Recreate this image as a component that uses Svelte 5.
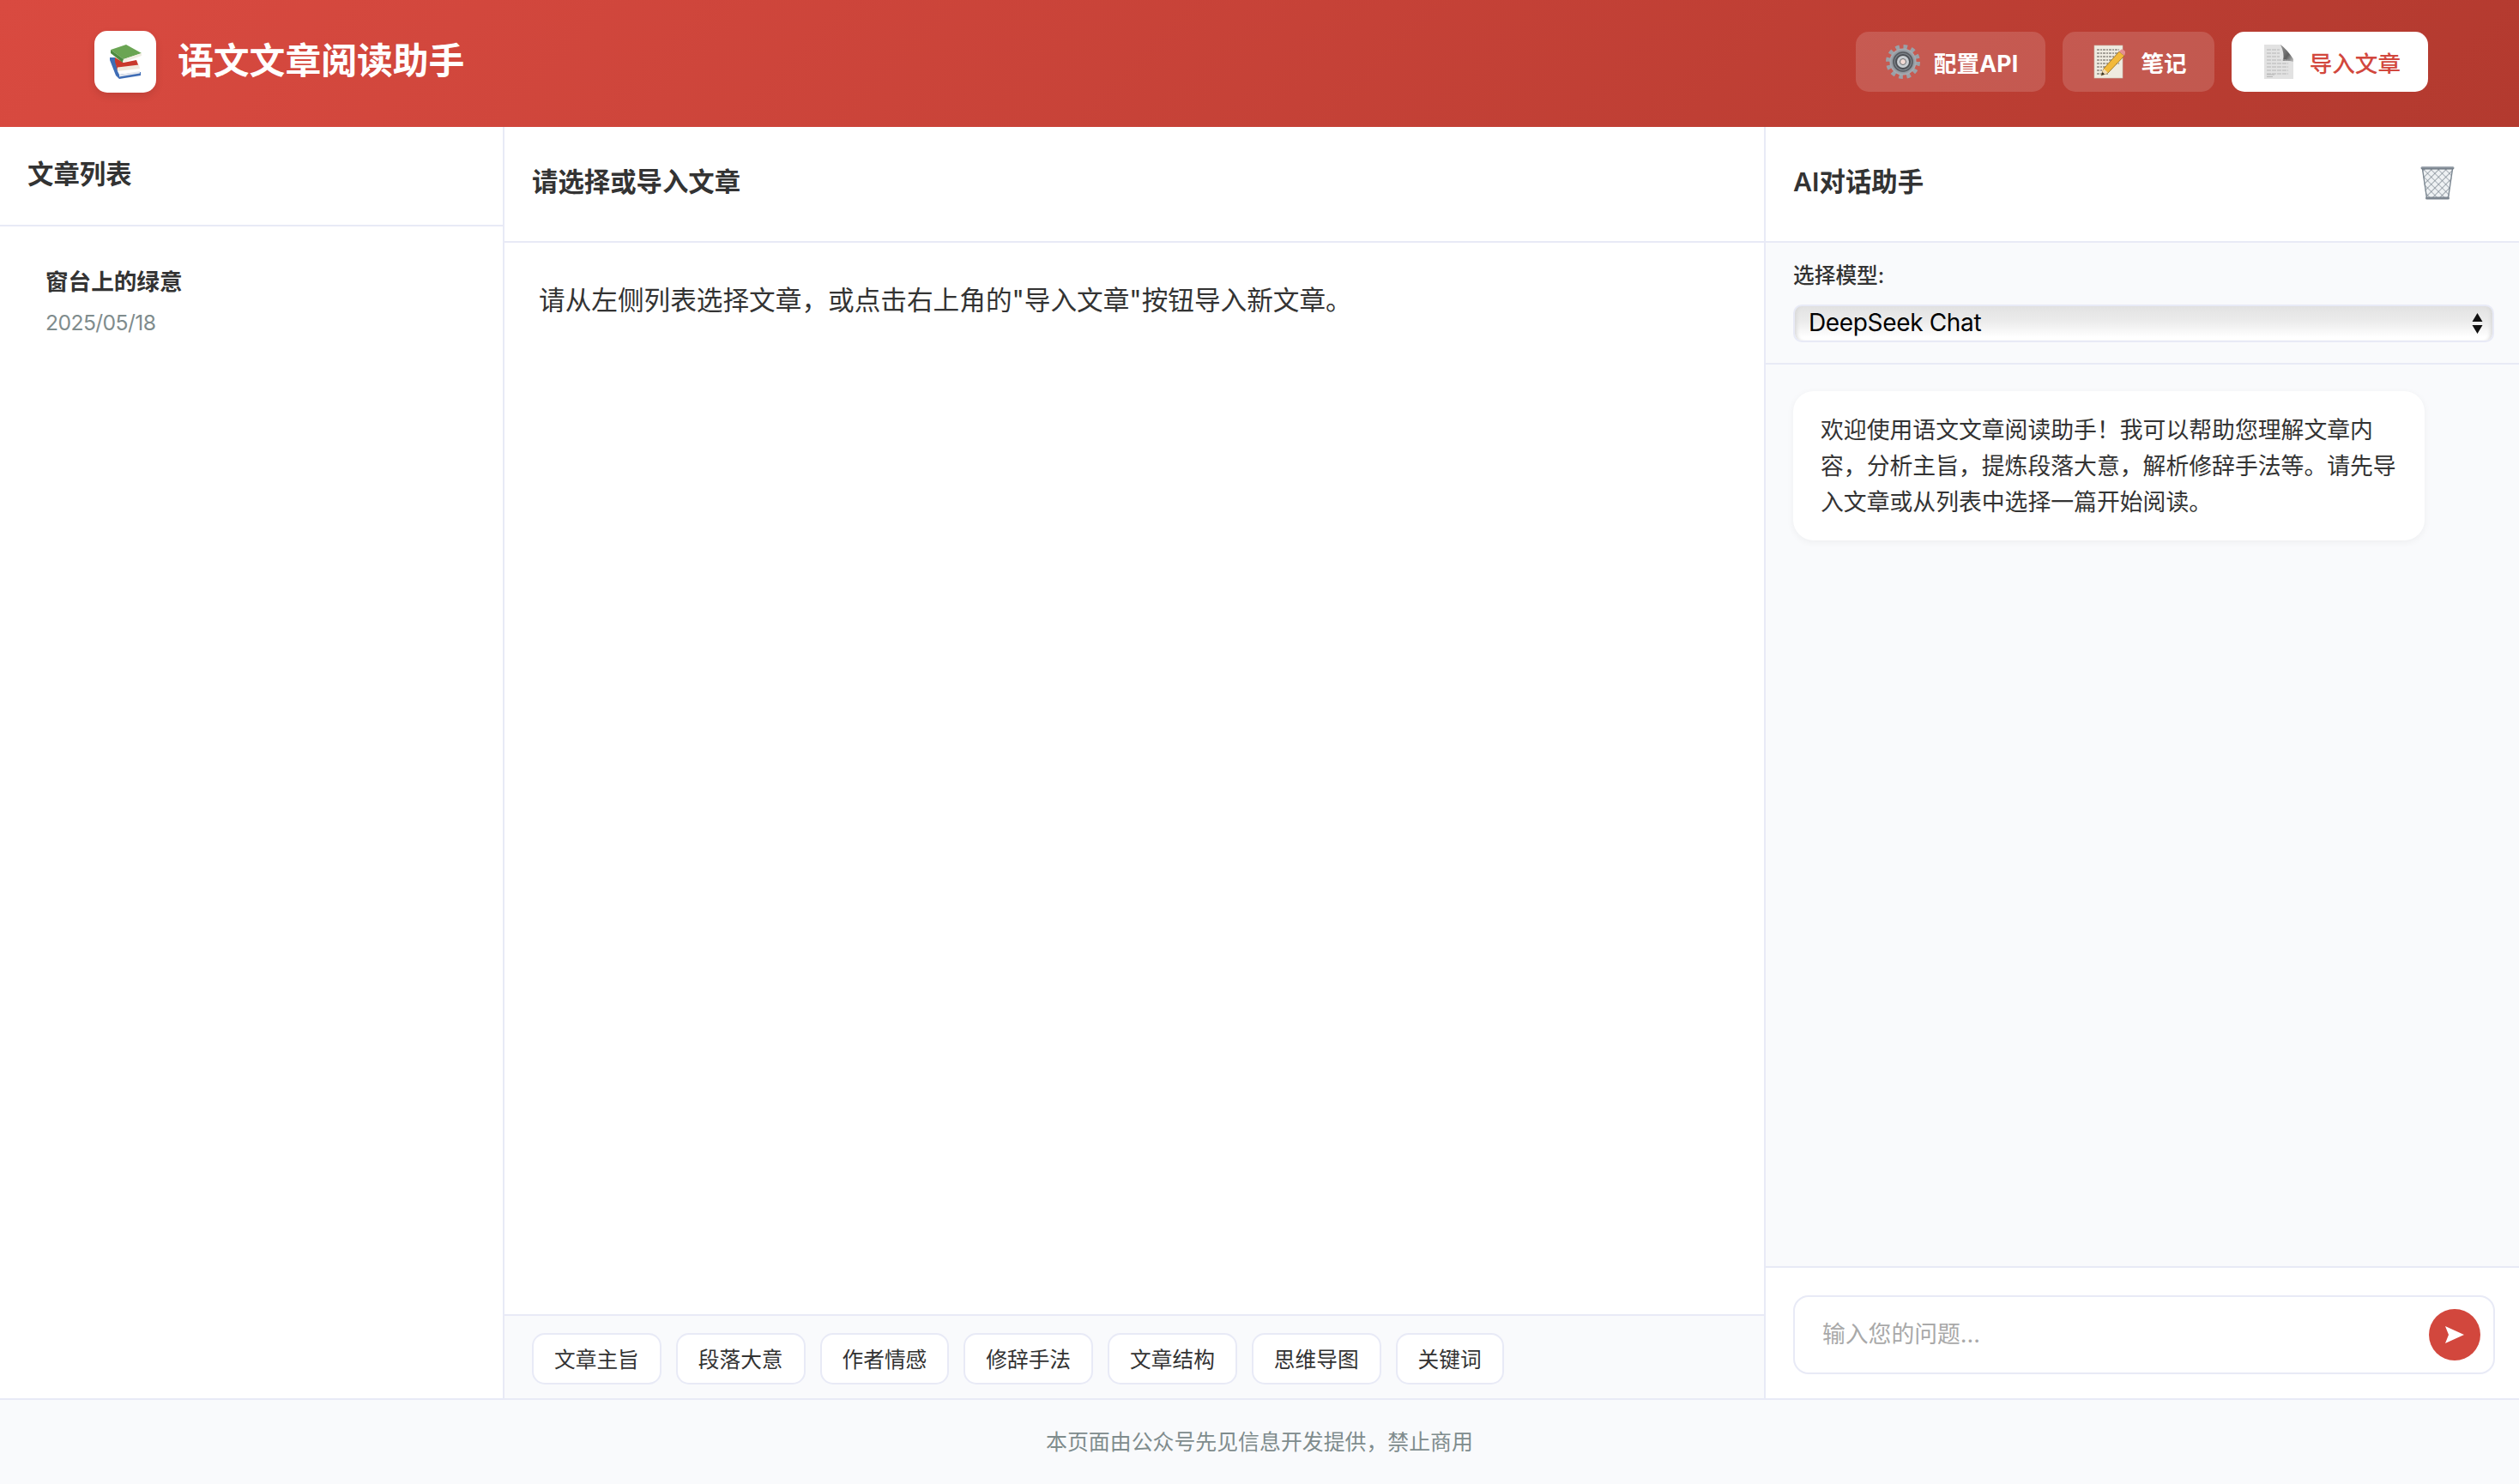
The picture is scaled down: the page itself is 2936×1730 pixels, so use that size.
<script lang="ts">
  const articles = [{ title: '窗台上的绿意', date: '2025/05/18' }];
  const tools = ['文章主旨', '段落大意', '作者情感', '修辞手法', '文章结构', '思维导图', '关键词'];
  const models = ['DeepSeek Chat', 'DeepSeek Reasoner'];
  const scribbles = [6, 10, 14, 18, 22, 26, 30, 34];
</script>

<div class="app">
  <header class="topbar">
    <div class="brand">
      <div class="logo">
        <svg width="37" height="42" viewBox="0 0 37 42">
          <path d="M0 16 L6 16 L9 32 L11 36 L36 33 L36 37 L11 41 L7 37 L0 19 Z" fill="#3f6db5" />
          <path d="M11 36 L35 32 L35 34.5 L11 38.5 Z" fill="#e4e7ee" />
          <path d="M6 16 L16 22 L31 19 L34 27 L9 31 L6 21 Z" fill="#c9392c" />
          <path d="M9 27.5 L34 24.5 L35 29 L9 32 Z" fill="#f0eade" />
          <path d="M1 7 L19 1 L37 11 L16 18 Z" fill="#6aa553" />
          <path d="M1 7 L1 11 L15 22 L16 18 Z" fill="#4d8a3f" />
          <path d="M16 18 L37 11 L37 14 L15 22 Z" fill="#f1ede2" />
        </svg>
      </div>
      <h1>语文文章阅读助手</h1>
    </div>
    <div class="actions">
      <button class="btn api">
        <svg class="ico" width="40" height="40" viewBox="0 0 40 40">
          <defs>
            <radialGradient id="gearFill">
              <stop offset="0.3" stop-color="#5f646a" />
              <stop offset="0.75" stop-color="#8a9097" />
              <stop offset="1" stop-color="#aab0b6" />
            </radialGradient>
          </defs>
          <circle cx="20" cy="20" r="17.5" fill="none" stroke="#9aa1a8" stroke-width="5" stroke-dasharray="4.6 4.56" />
          <circle cx="20" cy="20" r="15.5" fill="url(#gearFill)" />
          <circle cx="20" cy="20" r="11" fill="none" stroke="#55595e" stroke-width="1.5" />
          <circle cx="20" cy="20" r="8" fill="#c9cdd1" stroke="#4d5156" stroke-width="2" />
          <circle cx="20" cy="20" r="3.5" fill="#f2dcd6" stroke="#6b6f74" />
        </svg>
        配置API
      </button>
      <button class="btn">
        <svg class="ico" width="40" height="40" viewBox="0 0 40 40">
          <rect x="2" y="1" width="33" height="38" fill="#efebe0" stroke="#c9c4b6" stroke-width="0.6" />
          {#each scribbles as y}
            <path d="M5 {y} H{y > 22 ? 18 : 31}" stroke="#5a5750" stroke-width="1" stroke-dasharray="3 1 2 1" />
          {/each}
          <path d="M10 36 L13 28 L31 8 L37 13 L18 33 Z" fill="#f2b93b" stroke="#8f6a1d" stroke-width="0.8" />
          <path d="M13 28 L18 33 L10 36 Z" fill="#f3dcb4" />
          <path d="M10 36 L11.5 32 L14 34.5 Z" fill="#33302a" />
          <path d="M31 8 L33.5 5.5 Q36 5 38 8 Q38.5 10 37 13 Z" fill="#e58f92" />
        </svg>
        笔记
      </button>
      <button class="btn primary">
        <svg class="ico" width="40" height="40" viewBox="0 0 40 40">
          <defs>
            <linearGradient id="curl" x1="0" y1="0" x2="1" y2="1">
              <stop offset="0" stop-color="#9a9a9a" />
              <stop offset="0.6" stop-color="#5e5e5e" />
              <stop offset="1" stop-color="#c4c4c4" />
            </linearGradient>
          </defs>
          <path d="M3 0 H22 Q30 6 37 17 V40 H3 Z" fill="#e2e2e2" />
          <path d="M22 0 Q30 6 37 17 V20 Q31 18 25 19 Q27 10 22 0 Z" fill="url(#curl)" />
          {#each scribbles as y}
            <path d="M6 {y} H{y < 18 ? 21 : 31}" stroke="#b5b5b5" stroke-width="1.2" stroke-dasharray="5 1" />
          {/each}
          <path d="M6 35 H15 M6 37.5 H13" stroke="#b5b5b5" stroke-width="1" />
        </svg>
        导入文章
      </button>
    </div>
  </header>

  <main class="workspace">
    <aside class="sidebar">
      <div class="sidebar-head">文章列表</div>
      <div class="article-list">
        {#each articles as article}
          <div class="article-item">
            <div class="article-title">{article.title}</div>
            <div class="article-date">{article.date}</div>
          </div>
        {/each}
      </div>
    </aside>

    <section class="reader">
      <div class="pane-head">请选择或导入文章</div>
      <div class="reader-body">
        <p>请从左侧列表选择文章，或点击右上角的"导入文章"按钮导入新文章。</p>
      </div>
      <div class="toolbar">
        {#each tools as tool}
          <button class="chip">{tool}</button>
        {/each}
      </div>
    </section>

    <section class="chat">
      <div class="pane-head chat-head">
        <span>AI对话助手</span>
        <button class="clear" aria-label="清空对话">
          <svg width="40" height="40" viewBox="0 0 40 40">
            <defs>
              <linearGradient id="rim" x1="0" y1="0" x2="0" y2="1">
                <stop offset="0" stop-color="#aeb6be" />
                <stop offset="1" stop-color="#636e79" />
              </linearGradient>
              <pattern id="mesh" width="6" height="6" patternUnits="userSpaceOnUse" patternTransform="rotate(45)">
                <path d="M0 0 H6 M0 0 V6" stroke="#69747f" stroke-width="1.2" fill="none" />
              </pattern>
            </defs>
            <path d="M2 4 L7 38 H33 L38 4 Z" fill="#eef1f3" />
            <path d="M2 4 L7 38 H33 L38 4 Z" fill="url(#mesh)" />
            <path d="M2.5 4 L7.5 38 M37.5 4 L32.5 38" stroke="#7d8892" stroke-width="1.4" />
            <rect x="0.5" y="1" width="39" height="3.5" rx="1.7" fill="url(#rim)" />
            <rect x="6" y="36.5" width="28" height="3" rx="1.5" fill="#7d8690" />
          </svg>
        </button>
      </div>
      <div class="model-row">
        <label for="model">选择模型:</label>
        <div class="select-wrap">
          <select id="model">
            {#each models as model}
              <option>{model}</option>
            {/each}
          </select>
          <svg class="updown" width="13" height="24" viewBox="0 0 13 24">
            <path d="M6.5 0 L12.5 10 H0.5 Z M0.5 14 H12.5 L6.5 24 Z" fill="#111" />
          </svg>
        </div>
      </div>
      <div class="messages">
        <div class="bubble">欢迎使用语文文章阅读助手！我可以帮助您理解文章内容，分析主旨，提炼段落大意，解析修辞手法等。请先导入文章或从列表中选择一篇开始阅读。</div>
      </div>
      <div class="composer">
        <div class="composer-box">
          <input type="text" placeholder="输入您的问题..." />
          <button class="send" aria-label="发送">
            <svg width="22" height="20" viewBox="0 0 22 20">
              <path d="M0 0 L22 10 L0 20 L4 10 Z" fill="#fff" />
            </svg>
          </button>
        </div>
      </div>
    </section>
  </main>

  <footer class="foot">本页面由公众号先见信息开发提供，禁止商用</footer>
</div>

<style>
  :global(body) {
    margin: 0;
    background: #fff;
  }
  .app {
    height: 100vh;
    display: flex;
    flex-direction: column;
    font-family: Inter, "Noto Sans CJK SC", sans-serif;
    color: #333;
  }
  button,
  input,
  select {
    font-family: inherit;
  }

  .topbar {
    flex: 0 0 148px;
    box-sizing: border-box;
    padding: 0 106px 4px 110px;
    display: flex;
    align-items: center;
    justify-content: space-between;
    background: linear-gradient(135deg, #d94a40, #b33a2f);
    color: #fff;
  }
  .brand {
    display: flex;
    align-items: center;
    gap: 25px;
  }
  .logo {
    width: 72px;
    height: 72px;
    border-radius: 15px;
    background: #fff;
    display: flex;
    align-items: center;
    justify-content: center;
    box-shadow: 0 4px 10px rgba(0, 0, 0, 0.1);
  }
  h1 {
    margin: 0 0 9px;
    font-size: 41.8px;
    font-weight: 700;
  }
  .actions {
    display: flex;
    gap: 20px;
  }
  .btn {
    height: 70px;
    box-sizing: border-box;
    padding: 0 32px 0 35px;
    display: flex;
    align-items: center;
    gap: 16px;
    border: 0;
    border-radius: 15px;
    background: rgba(255, 255, 255, 0.15);
    color: #fff;
    font-size: 26.6px;
    font-weight: 700;
  }
  .btn.api {
    letter-spacing: 0.2px;
  }
  .btn.primary {
    background: #fff;
    color: #d2473d;
    font-weight: 500;
  }
  .ico {
    flex: none;
  }

  .workspace {
    flex: 1;
    min-height: 0;
    display: flex;
  }
  .sidebar {
    flex: 0 0 588px;
    box-sizing: border-box;
    border-right: 2px solid #e8eaf6;
  }
  .sidebar-head {
    height: 116px;
    box-sizing: border-box;
    padding: 0 32px 8px;
    display: flex;
    align-items: center;
    border-bottom: 2px solid #e8eaf6;
    font-size: 30.4px;
    font-weight: 600;
  }
  .article-list {
    padding: 45px 0 0 53px;
  }
  .article-title {
    font-size: 26.6px;
    font-weight: 600;
    line-height: 38px;
  }
  .article-date {
    margin-top: 11px;
    font-size: 24.7px;
    letter-spacing: -0.6px;
    line-height: 36px;
    color: #7f8c8d;
  }

  .reader {
    flex: 1;
    min-width: 0;
    display: flex;
    flex-direction: column;
    border-right: 2px solid #e8eaf6;
  }
  .pane-head {
    flex: 0 0 135px;
    box-sizing: border-box;
    padding: 0 32px 10px;
    display: flex;
    align-items: center;
    border-bottom: 2px solid #e8eaf6;
    font-size: 30.4px;
    font-weight: 600;
  }
  .reader-body {
    flex: 1;
    padding: 43px 40px;
  }
  .reader-body p {
    margin: 0;
    font-size: 30.65px;
    line-height: 48px;
  }
  .toolbar {
    flex: 0 0 98px;
    box-sizing: border-box;
    padding: 20px 32px 0;
    display: flex;
    align-items: flex-start;
    gap: 17px;
    border-top: 2px solid #e8eaf6;
    background: #f9fafc;
  }
  .chip {
    height: 60px;
    box-sizing: border-box;
    padding: 0 24px 2px;
    border: 2px solid #e8eaf6;
    border-radius: 15px;
    background: #fff;
    color: #333;
    font-size: 24.7px;
  }

  .chat {
    flex: 0 0 878px;
    display: flex;
    flex-direction: column;
    background: #f9fafc;
  }
  .chat-head {
    justify-content: space-between;
    background: #fff;
    padding-right: 75px;
  }
  .clear {
    margin-top: 7px;
    padding: 0;
    border: 0;
    background: none;
    display: flex;
  }
  .model-row {
    padding: 20px 29px 24px 32px;
    border-bottom: 2px solid #e8eaf6;
  }
  .model-row label {
    display: block;
    font-size: 24.7px;
    font-weight: 500;
    line-height: 36px;
    margin-bottom: 16px;
  }
  .select-wrap {
    position: relative;
  }
  select {
    display: block;
    width: 100%;
    height: 44px;
    box-sizing: border-box;
    padding: 0 16px 2px;
    appearance: none;
    border: 2px solid #e8eaf6;
    border-radius: 10px;
    background: linear-gradient(#e2e2e2, #ececec 45%, #fff 90%);
    box-shadow: inset 5px 0 4px -3px #d8d8d8, inset -5px 0 4px -3px #d8d8d8;
    color: #000;
    font-size: 28px;
    letter-spacing: -0.35px;
  }
  .updown {
    position: absolute;
    right: 13px;
    top: 10px;
    pointer-events: none;
  }
  .messages {
    flex: 1;
    min-height: 0;
    padding: 31px 32px;
  }
  .bubble {
    width: 736px;
    box-sizing: border-box;
    padding: 24px 32px;
    border-radius: 24px;
    background: #fff;
    box-shadow: 0 2px 8px rgba(0, 0, 0, 0.05);
    font-size: 26.83px;
    line-height: 42px;
  }
  .composer {
    flex: 0 0 154px;
    box-sizing: border-box;
    padding: 32px 28px 0 32px;
    border-top: 2px solid #e8eaf6;
    background: #fff;
  }
  .composer-box {
    height: 92px;
    box-sizing: border-box;
    padding: 0 15px 0 30px;
    display: flex;
    align-items: center;
    border: 2px solid #e8eaf6;
    border-radius: 18px;
  }
  input {
    flex: 1;
    min-width: 0;
    margin-bottom: 2px;
    border: 0;
    outline: 0;
    background: none;
    font-size: 26.8px;
  }
  input::placeholder {
    color: #a9a9a9;
  }
  .send {
    flex: none;
    width: 60px;
    height: 60px;
    padding: 0;
    border: 0;
    border-radius: 50%;
    background: #d2473d;
    display: flex;
    align-items: center;
    justify-content: center;
  }

  .foot {
    flex: 0 0 100px;
    box-sizing: border-box;
    padding-bottom: 4px;
    display: flex;
    align-items: center;
    justify-content: center;
    border-top: 2px solid #e8eaf6;
    background: #f9fafc;
    color: #7f8c8d;
    font-size: 24.9px;
  }
</style>
